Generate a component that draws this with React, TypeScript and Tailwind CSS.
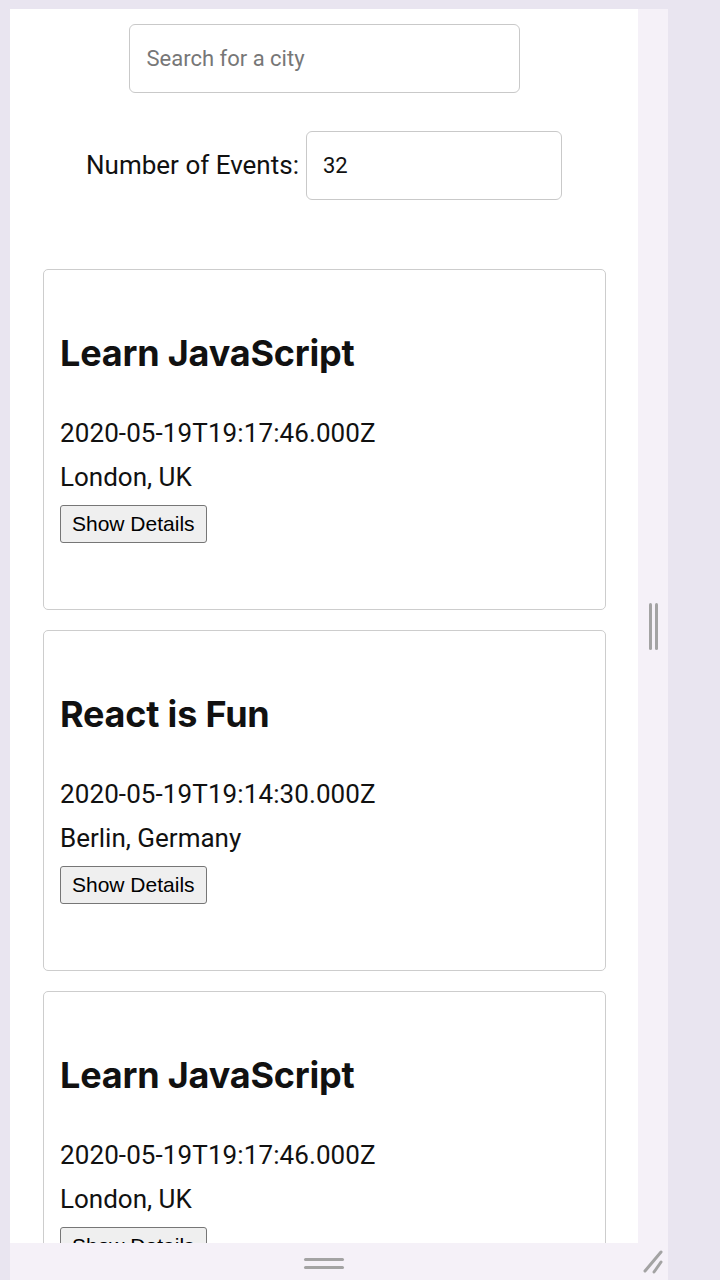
const events = [
  { id: 1, title: "Learn JavaScript", date: "2020-05-19T19:17:46.000Z", location: "London, UK" },
  { id: 2, title: "React is Fun", date: "2020-05-19T19:14:30.000Z", location: "Berlin, Germany" },
  { id: 3, title: "Learn JavaScript", date: "2020-05-19T19:17:46.000Z", location: "London, UK" },
];

function EventCard({ title, date, location }: { title: string; date: string; location: string }) {
  return (
    <li className="h-[341px] shrink-0 rounded-[5px] border border-[#cdcdcd] px-4 pt-[61px]">
      <h2 className="font-['Inter',sans-serif] text-[36px] font-bold leading-[44px] tracking-[-0.2px] text-[#111]">
        {title}
      </h2>
      <p className="mt-[43px] text-[26px] leading-[30px] tracking-[0.1px] text-[#111]">{date}</p>
      <p className="mt-[14px] text-[26px] leading-[30px] text-[#111]">{location}</p>
      <button className="mt-[13px] h-[38px] rounded-[3px] border border-[#767676] bg-[#efefef] px-[11px] font-['Liberation_Sans',Arial,sans-serif] text-[21px] text-black">
        Show Details
      </button>
    </li>
  );
}

export default function App() {
  return (
    <div className="h-[1280px] w-[720px] overflow-hidden bg-[#e9e5f0] pl-[10px] pt-[9px] font-['Roboto',sans-serif]">
      <div className="flex w-[658px] flex-col">
        <div className="flex h-[1234px]">
          <main className="w-[628px] overflow-hidden bg-white">
            <div className="flex justify-center pt-[15px]">
              <input
                type="text"
                placeholder="Search for a city"
                className="h-[69px] w-[391px] rounded-[6px] border border-[#c9c9c9] px-[17px] text-[22px] text-[#111] outline-none placeholder:text-[#777]"
              />
            </div>
            <div className="mt-[38px] flex items-center justify-center gap-[7px]">
              <label className="text-[26px] text-[#111]">Number of Events:</label>
              <input
                type="number"
                defaultValue={32}
                className="h-[69px] w-[256px] rounded-[6px] border border-[#c9c9c9] px-4 text-[22px] text-[#111] outline-none"
              />
            </div>
            <ul className="mt-[69px] flex flex-col gap-5 pl-[33px] pr-[32px]">
              {events.map((e) => (
                <EventCard key={e.id} title={e.title} date={e.date} location={e.location} />
              ))}
            </ul>
          </main>
          <div className="flex w-[30px] items-center justify-center gap-[3px] bg-[#f5f1f8]">
            <span className="h-[47px] w-[3px] rounded-full bg-[#a3a3a3]" />
            <span className="h-[47px] w-[3px] rounded-full bg-[#a3a3a3]" />
          </div>
        </div>
        <div className="flex h-[37px] bg-[#f5f1f8]">
          <div className="flex w-[628px] flex-col items-center gap-[5px] pt-[15px]">
            <span className="h-[3px] w-[40px] rounded-full bg-[#a3a3a3]" />
            <span className="h-[3px] w-[40px] rounded-full bg-[#a3a3a3]" />
          </div>
          <div className="w-[30px]">
            <svg width="30" height="37" viewBox="0 0 30 37">
              <line x1="7" y1="28" x2="23" y2="9" stroke="#a3a3a3" strokeWidth="3" strokeLinecap="round" />
              <line x1="16" y1="29" x2="23" y2="19" stroke="#a3a3a3" strokeWidth="3" strokeLinecap="round" />
            </svg>
          </div>
        </div>
      </div>
    </div>
  );
}
